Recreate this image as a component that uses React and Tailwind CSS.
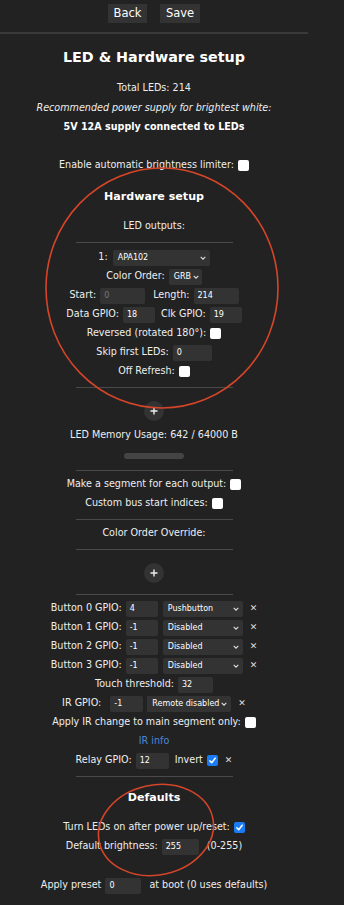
import React from 'react';

function Row({ children, className = '' }) {
  return <div className={`flex items-center justify-center h-[19px] gap-[4px] whitespace-nowrap ${className}`}>{children}</div>;
}

function Input({ value, w, dim }) {
  return (
    <div
      className={`h-[16px] bg-[#333] rounded-[2px] flex items-center pl-[4px] text-[8px] ${dim ? 'text-[#777]' : 'text-white'}`}
      style={{ width: w }}
    >
      {value}
    </div>
  );
}

function Select({ value, w, className = '' }) {
  return (
    <div
      className={`h-[16px] bg-[#333] rounded-[2px] flex items-center justify-between pl-[5px] pr-[4px] text-[8px] text-white whitespace-nowrap ${className}`}
      style={{ width: w }}
    >
      <span>{value}</span>
      <svg width="6" height="4" viewBox="0 0 6 4" className="ml-[2px] shrink-0">
        <path d="M0.7 0.8 L3 3.1 L5.3 0.8" fill="none" stroke="#ddd" strokeWidth="1.1" />
      </svg>
    </div>
  );
}

function Check({ on }) {
  if (on) {
    return (
      <div className="w-[11px] h-[11px] rounded-[2px] bg-[#1a7cf5] flex items-center justify-center">
        <svg width="9" height="9" viewBox="0 0 9 9">
          <path d="M1.8 4.8 L3.7 6.7 L7.2 2.2" fill="none" stroke="#fff" strokeWidth="1.5" strokeLinecap="round" strokeLinejoin="round" />
        </svg>
      </div>
    );
  }
  return <div className="w-[11px] h-[11px] rounded-[2px] bg-white" />;
}

function X() {
  return <span className="text-[9px] font-bold text-[#ddd] ml-[3px]">✕</span>;
}

function Hr({ className = '' }) {
  return <div className={`w-[157px] h-px bg-[#4a4a4a] ${className}`} />;
}

function Plus({ className = '' }) {
  return (
    <div className={`w-[20px] h-[20px] rounded-full bg-[#333] flex items-center justify-center ${className}`}>
      <svg width="10" height="10" viewBox="0 0 10 10">
        <path d="M5 1.5 V8.5 M1.5 5 H8.5" stroke="#eee" strokeWidth="1.4" />
      </svg>
    </div>
  );
}

export default function App() {
  const buttons = [
    ['0', '4', 'Pushbutton'],
    ['1', '-1', 'Disabled'],
    ['2', '-1', 'Disabled'],
    ['3', '-1', 'Disabled'],
  ];

  return (
    <div className="relative w-[344px] min-h-[905px] bg-[#222] text-[#eee] font-['DejaVu_Sans',sans-serif] text-[9.6px] overflow-hidden">
      <div className="w-[308px] flex flex-col items-center">
        <div className="w-full h-[34px] border-b-2 border-[#3a3a3a] flex justify-center items-start pt-[4px] gap-[13px]">
          <div className="w-[39px] h-[19px] bg-[#333] flex items-center justify-center text-[11.5px] text-white">Back</div>
          <div className="w-[40px] h-[19px] bg-[#333] flex items-center justify-center text-[11.5px] text-white">Save</div>
        </div>

        <h1 className="mt-[13px] h-[20px] leading-[20px] text-[14.3px] font-bold text-white">LED &amp; Hardware setup</h1>
        <div className="mt-[11px] h-[20px] leading-[20px]">Total LEDs: 214</div>
        <div className="h-[19px] leading-[19px] italic">Recommended power supply for brightest white:</div>
        <div className="h-[20px] leading-[20px] font-bold text-white">5V 12A supply connected to LEDs</div>

        <Row className="mt-[19px]">Enable automatic brightness limiter: <Check /></Row>

        <h3 className="mt-[12.5px] h-[18px] leading-[18px] text-[11.1px] font-bold text-white">Hardware setup</h3>
        <Row className="mt-[11.5px]">LED outputs:</Row>
        <Hr className="mt-[5.5px]" />

        <Row className="mt-[5.5px]">1: <Select value="APA102" w={97} className="ml-[1px]" /></Row>
        <Row>Color Order: <Select value="GRB" w={33} /></Row>
        <Row>
          <span>Start:</span> <Input value="0" w={45} dim />
          <span className="ml-[4px]">Length:</span> <Input value="214" w={45} />
        </Row>
        <Row>
          <span>Data GPIO:</span> <Input value="18" w={32} />
          <span className="ml-[2px]">Clk GPIO:</span> <Input value="19" w={32} />
        </Row>
        <Row>Reversed (rotated 180°): <Check /></Row>
        <Row>Skip first LEDs: <Input value="0" w={39} /></Row>
        <Row>Off Refresh: <Check /></Row>
        <Hr className="mt-[5.5px]" />

        <Plus className="mt-[13px]" />
        <Row className="mt-[5.5px]">LED Memory Usage: 642 / 64000 B</Row>
        <div className="mt-[7.5px] w-[60px] h-[6px] rounded-full bg-[#444]" />
        <Hr className="mt-[11px]" />

        <Row className="mt-[4.5px]">Make a segment for each output: <Check /></Row>
        <Row>Custom bus start indices: <Check /></Row>
        <Hr className="mt-[5.5px]" />
        <Row className="mt-[4.5px]">Color Order Override:</Row>
        <Hr className="mt-[5.5px]" />
        <Plus className="mt-[13px]" />
        <Hr className="mt-[11px]" />

        <div className="mt-[4.5px] flex flex-col items-center">
          {buttons.map(([n, v, s]) => (
            <Row key={n}>
              <span>Button {n} GPIO:</span> <Input value={v} w={32} />
              <Select value={s} w={80} className="ml-[1px]" />
              <X />
            </Row>
          ))}
          <Row>Touch threshold: <Input value="32" w={35} /></Row>
          <Row className="gap-0">
            <span className="mr-[5px]">IR GPIO:</span>
            <Input value="-1" w={33} />
            <Select value="Remote disabled" w={84} className="rounded-l-none pl-[3px] pr-[3px]" />
            <X />
          </Row>
          <Row>Apply IR change to main segment only: <Check /></Row>
          <Row><span className="text-[#4a86d6]">IR info</span></Row>
          <Row>
            <span>Relay GPIO:</span> <Input value="12" w={33} />
            <span className="ml-[2px]">Invert</span> <Check on /> <X />
          </Row>
        </div>
        <Hr className="mt-[5.5px]" />

        <h3 className="mt-[12px] h-[18px] leading-[18px] text-[11.1px] font-bold text-white">Defaults</h3>
        <Row className="mt-[11.5px]">Turn LEDs on after power up/reset: <Check on /></Row>
        <Row>Default brightness: <Input value="255" w={37} /> <span className="ml-[4px]">(0-255)</span></Row>
        <Row className="mt-[20px]">Apply preset <Input value="0" w={36} /> <span className="ml-[4px]">at boot (0 uses defaults)</span></Row>
      </div>

      <svg className="absolute left-0 top-0 pointer-events-none" width="344" height="905" viewBox="0 0 344 905">
        <ellipse cx="162" cy="288" rx="116" ry="120" fill="none" stroke="#d5452a" strokeWidth="1.6" />
        <ellipse cx="156" cy="830" rx="58" ry="45" fill="none" stroke="#d5452a" strokeWidth="1.6" transform="rotate(-12 156 830)" />
      </svg>
    </div>
  );
}
